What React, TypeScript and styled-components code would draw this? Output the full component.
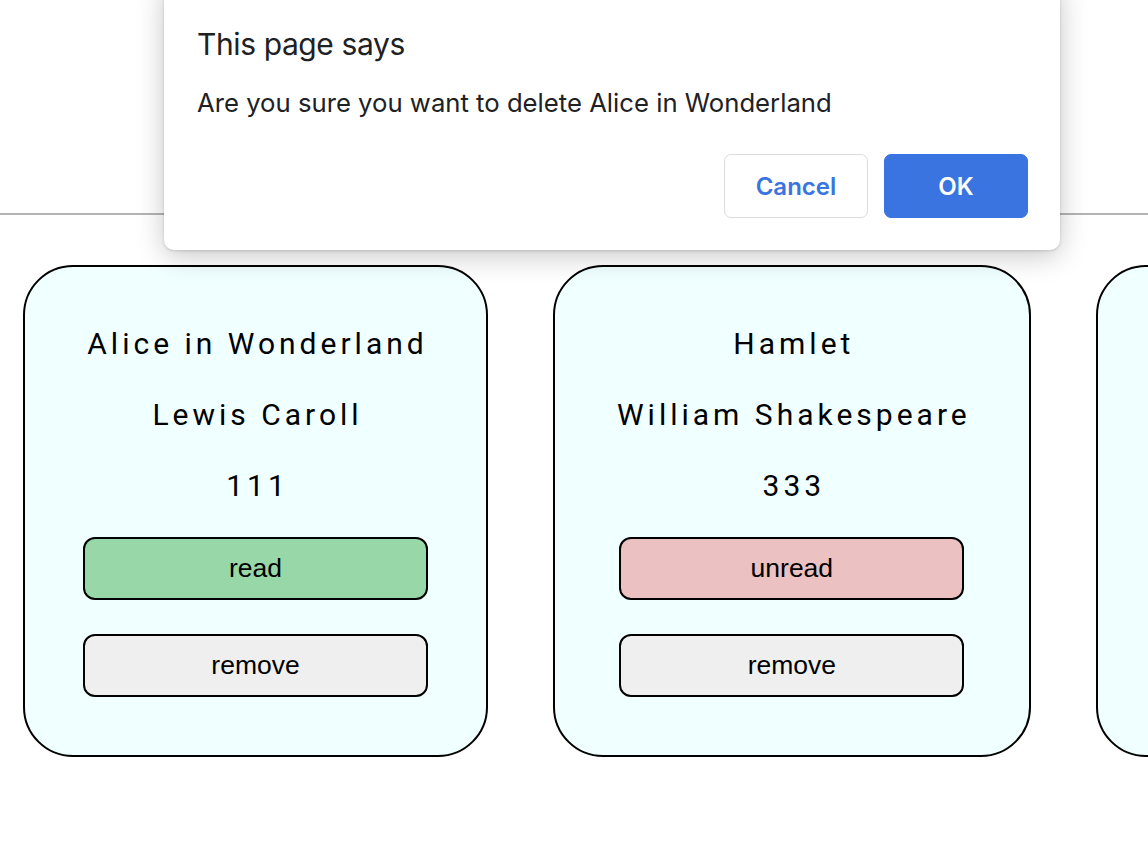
import styled, { createGlobalStyle } from "styled-components";

const GlobalStyle = createGlobalStyle`
  html, body {
    margin: 0;
    padding: 0;
    background: #fff;
    overflow: hidden;
  }
  body {
    font-family: Roboto, "Liberation Sans", sans-serif;
  }
`;

const Page = styled.div`
  position: relative;
  width: 1148px;
  height: 854px;
  overflow: hidden;
`;

const Header = styled.header`
  height: 213px;
  border-bottom: 2px solid #b4b4b4;
`;

const Shelf = styled.div`
  display: flex;
  gap: 65px;
  padding: 50px 0 0 23px;
  width: max-content;
`;

const Card = styled.div`
  display: flex;
  flex-direction: column;
  align-items: center;
  padding: 57px 58px 58px;
  border: 2px solid #000;
  border-radius: 50px;
  background: #f0ffff;
`;

const Line = styled.div`
  font-family: Roboto, sans-serif;
  font-size: 30px;
  line-height: 40px;
  letter-spacing: 4px;
  text-indent: 4px;
  color: #000;
  margin-bottom: 31px;
  white-space: nowrap;
`;

const Button = styled.button<{ $tone: "read" | "unread" | "plain" }>`
  width: 345px;
  height: 63px;
  border: 2px solid #000;
  border-radius: 12px;
  font-family: "Liberation Sans", Arial, sans-serif;
  font-size: 26.5px;
  color: #000;
  background: ${({ $tone }) =>
    $tone === "read" ? "#98d8a8" : $tone === "unread" ? "#ebc1c1" : "#efefef"};
  & + & {
    margin-top: 34px;
  }
`;

const Dialog = styled.div`
  position: absolute;
  left: 164px;
  top: -20px;
  width: 896px;
  height: 270px;
  box-sizing: border-box;
  padding: 46px 32px 0 33px;
  background: #fff;
  border-radius: 10px;
  box-shadow: 0 6px 28px rgba(0, 0, 0, 0.22), 0 1px 3px rgba(0, 0, 0, 0.15);
  font-family: Inter, "Noto Sans", sans-serif;
  color: #202124;
`;

const DialogTitle = styled.div`
  font-size: 30px;
  line-height: 36px;
  letter-spacing: -0.4px;
`;

const DialogText = styled.div`
  margin-top: 25px;
  font-size: 25.7px;
  line-height: 32px;
`;

const DialogActions = styled.div`
  display: flex;
  justify-content: flex-end;
  gap: 16px;
  margin-top: 35px;
`;

const DialogButton = styled.button<{ $primary?: boolean }>`
  width: 144px;
  height: 64px;
  border-radius: 7px;
  font-family: Inter, "Noto Sans", sans-serif;
  font-size: 24px;
  font-weight: 600;
  border: 1px solid ${({ $primary }) => ($primary ? "#3a74e0" : "#dadce0")};
  background: ${({ $primary }) => ($primary ? "#3a74e0" : "#fff")};
  color: ${({ $primary }) => ($primary ? "#fff" : "#3a74e0")};
`;

const books = [
  { title: "Alice in Wonderland", author: "Lewis Caroll", pages: 111, read: true },
  { title: "Hamlet", author: "William Shakespeare", pages: 333, read: false },
  { title: "The Hobbit", author: "J. R. R. Tolkien", pages: 310, read: true },
];

export default function App() {
  return (
    <Page>
      <GlobalStyle />
      <Header />
      <Shelf>
        {books.map((b) => (
          <Card key={b.title}>
            <Line>{b.title}</Line>
            <Line>{b.author}</Line>
            <Line>{b.pages}</Line>
            <Button $tone={b.read ? "read" : "unread"}>{b.read ? "read" : "unread"}</Button>
            <Button $tone="plain">remove</Button>
          </Card>
        ))}
      </Shelf>
      <Dialog>
        <DialogTitle>This page says</DialogTitle>
        <DialogText>Are you sure you want to delete Alice in Wonderland</DialogText>
        <DialogActions>
          <DialogButton>Cancel</DialogButton>
          <DialogButton $primary>OK</DialogButton>
        </DialogActions>
      </Dialog>
    </Page>
  );
}
